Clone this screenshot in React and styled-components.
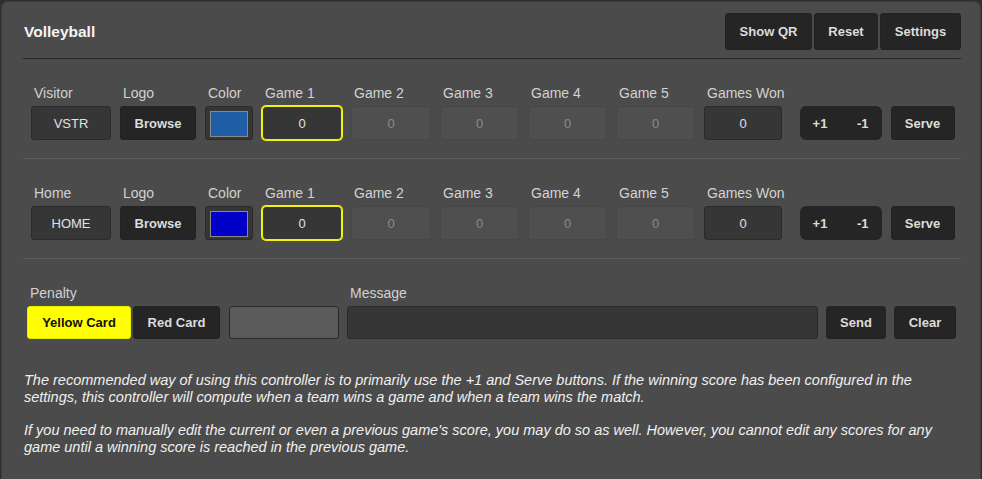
import React from 'react'
import styled, { createGlobalStyle } from 'styled-components'

const GlobalStyles = createGlobalStyle`
    html, body {
        margin: 0;
        padding: 0;
        background: #303030;
        font-family: "Liberation Sans", Arial, sans-serif;
    }
`

const StyledPanel = styled.div`
    margin: 1px 1px 0 1px;
    min-height: 478px;
    box-sizing: border-box;
    background: #4b4b4b;
    border: 1px solid #3c3c3c;
    border-bottom: none;
    border-radius: 7px 7px 0 0;
    padding: 11px 19px 0 21px;
`

const StyledHeader = styled.div`
    display: flex;
    align-items: center;
    justify-content: space-between;
    padding-bottom: 8px;
    border-bottom: 1px solid #262626;
`

const StyledTitle = styled.h1`
    margin: 0 0 0 1px;
    font-size: 15.5px;
    font-weight: bold;
    color: #f4f4f4;
`

const StyledGroup = styled.div`
    display: flex;
    gap: ${p => p.gap ?? 2}px;
`

const StyledButton = styled.button`
    box-sizing: border-box;
    width: ${p => p.width}px;
    height: ${p => p.height ?? 34}px;
    padding: 0;
    border: 1px solid ${p => p.yellow ? '#e8e800' : '#222'};
    border-radius: 3px;
    background: ${p => p.yellow ? '#ffff00' : '#252525'};
    color: ${p => p.yellow ? '#111' : '#dcdcdc'};
    font-family: inherit;
    font-size: 13px;
    font-weight: bold;
    cursor: pointer;
`

const StyledRow = styled.div`
    display: flex;
    align-items: flex-end;
    gap: ${p => p.gap ?? 9}px;
    padding: ${p => p.padding};
    border-bottom: ${p => p.last ? 'none' : '1px solid #5c5c5c'};
`

const StyledField = styled.div`
    display: flex;
    flex-direction: column;
    gap: 4px;
`

const StyledLabel = styled.label`
    padding-left: 3px;
    font-size: 14px;
    line-height: 17px;
    color: #d2d2d2;
    white-space: nowrap;
`

const StyledInput = styled.div`
    box-sizing: border-box;
    width: ${p => p.width}px;
    height: ${p => p.height ?? 34}px;
    margin-left: ${p => p.offset ?? 0}px;
    display: flex;
    align-items: center;
    justify-content: center;
    border-radius: ${p => p.active ? 4 : 3}px;
    border: ${p => p.active ? '1px solid #f2f20a' : p.disabled ? '1px solid #474747' : '1px solid #2a2a2a'};
    box-shadow: ${p => p.active ? '0 0 0 1px #f2f20a' : 'none'};
    background: ${p => p.disabled ? '#4f4f4f' : p.blank ? '#5a5a5a' : '#363636'};
    color: ${p => p.disabled ? '#8a8a8a' : '#e2e2e2'};
    font-size: 13px;
`

const StyledSwatch = styled.div`
    box-sizing: border-box;
    width: 48px;
    height: 34px;
    padding: 4px;
    border: 1px solid #2a2a2a;
    border-radius: 3px;
    background: #363636;

    & > div {
        height: 100%;
        border: 1px solid #8a8a8a;
        background: ${p => p.color};
    }
`

const StyledStepper = styled.div`
    display: flex;
    align-items: center;
    justify-content: space-between;
    width: 82px;
    height: 34px;
    box-sizing: border-box;
    padding: 0 13px;
    margin-left: 6px;
    border-radius: 6px;
    background: #252525;
    color: #dcdcdc;
    font-size: 13px;
    font-weight: bold;
`

const StyledNotes = styled.div`
    padding: 33px 0 0 1px;
    color: #f0f0f0;
    font-size: 14.5px;
    font-style: italic;
    line-height: 17px;

    p {
        margin: 0 0 16px;
    }
`

const games = ['Game 1', 'Game 2', 'Game 3', 'Game 4', 'Game 5']
const gameWidths = [80, 80, 79, 79, 79]

const TeamRow = ({ name, code, color }) =>
    <StyledRow padding='26px 0 18px 8px'>
        <StyledField>
            <StyledLabel>{name}</StyledLabel>
            <StyledInput width={80}>{code}</StyledInput>
        </StyledField>
        <StyledField>
            <StyledLabel>Logo</StyledLabel>
            <StyledButton width={76}>Browse</StyledButton>
        </StyledField>
        <StyledField>
            <StyledLabel>Color</StyledLabel>
            <StyledSwatch color={color}><div/></StyledSwatch>
        </StyledField>
        {games.map((game, i) =>
            <StyledField key={game}>
                <StyledLabel>{game}</StyledLabel>
                <StyledInput width={gameWidths[i]} active={i === 0} disabled={i > 0}>0</StyledInput>
            </StyledField>
        )}
        <StyledField>
            <StyledLabel>Games Won</StyledLabel>
            <StyledInput width={78}>0</StyledInput>
        </StyledField>
        <StyledStepper>
            <span>+1</span>
            <span>-1</span>
        </StyledStepper>
        <StyledButton width={64}>Serve</StyledButton>
    </StyledRow>

const App = () =>
    <StyledPanel>
        <GlobalStyles/>
        <StyledHeader>
            <StyledTitle>Volleyball</StyledTitle>
            <StyledGroup>
                <StyledButton width={87} height={37}>Show QR</StyledButton>
                <StyledButton width={64} height={37}>Reset</StyledButton>
                <StyledButton width={81} height={37}>Settings</StyledButton>
            </StyledGroup>
        </StyledHeader>

        <TeamRow name='Visitor' code='VSTR' color='#1f5ea6'/>
        <TeamRow name='Home' code='HOME' color='#0000c8'/>

        <StyledRow padding='26px 0 0 4px' gap={8} last>
            <StyledField>
                <StyledLabel>Penalty</StyledLabel>
                <StyledGroup>
                    <StyledButton width={104} height={33} yellow>Yellow Card</StyledButton>
                    <StyledButton width={87} height={33}>Red Card</StyledButton>
                </StyledGroup>
            </StyledField>
            <StyledInput width={110} height={33} offset={1} blank/>
            <StyledField>
                <StyledLabel>Message</StyledLabel>
                <StyledInput width={471} height={33}/>
            </StyledField>
            <StyledButton width={60} height={33}>Send</StyledButton>
            <StyledButton width={62} height={33}>Clear</StyledButton>
        </StyledRow>

        <StyledNotes>
            <p>
                The recommended way of using this controller is to primarily use the +1 and Serve buttons. If the winning score has been configured in the settings, this controller will compute when a team wins a game and when a team wins the match.
            </p>
            <p>
                If you need to manually edit the current or even a previous game's score, you may do so as well. However, you cannot edit any scores for any game until a winning score is reached in the previous game.
            </p>
        </StyledNotes>
    </StyledPanel>

export default App
